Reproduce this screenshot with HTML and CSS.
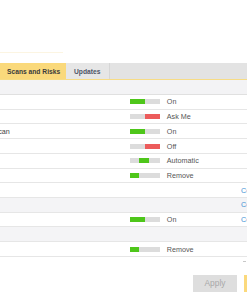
FILE: index.html
```html
<!DOCTYPE html>
<html>
<head>
<meta charset="utf-8">
<link rel="stylesheet" href="styles.css">
</head>
<body>
<div class="page">
  <div class="top"><div class="glow"></div></div>
  <div class="tabs">
    <div class="tab active">Scans and Risks</div>
    <div class="tab">Updates</div>
  </div>
  <div class="list">
    <div class="row head"></div>
    <div class="row"><div class="label"></div><div class="bar"><span class="fill green" style="left:0;width:50%"></span></div><div class="status">On</div><div class="link"></div></div>
    <div class="row"><div class="label"></div><div class="bar"><span class="fill red" style="left:50%;width:50%"></span></div><div class="status">Ask Me</div><div class="link"></div></div>
    <div class="row"><div class="label"><span class="clip"><span>can</span></span></div><div class="bar"><span class="fill green" style="left:0;width:50%"></span></div><div class="status">On</div><div class="link"></div></div>
    <div class="row"><div class="label"></div><div class="bar"><span class="fill red" style="left:50%;width:50%"></span></div><div class="status">Off</div><div class="link"></div></div>
    <div class="row"><div class="label"></div><div class="bar"><span class="fill green" style="left:33.3%;width:33.3%"></span></div><div class="status">Automatic</div><div class="link"></div></div>
    <div class="row"><div class="label"></div><div class="bar"><span class="fill green" style="left:0;width:33.3%"></span></div><div class="status">Remove</div><div class="link"></div></div>
    <div class="row"><div class="label"></div><div class="nobar"></div><div class="status"></div><div class="link">Co</div></div>
    <div class="row shade"><div class="label"></div><div class="nobar"></div><div class="status"></div><div class="link">Co</div></div>
    <div class="row"><div class="label"></div><div class="bar"><span class="fill green" style="left:0;width:50%"></span></div><div class="status">On</div><div class="link">Co</div></div>
    <div class="row shade"></div>
    <div class="row"><div class="label"></div><div class="bar"><span class="fill green" style="left:0;width:33.3%"></span></div><div class="status">Remove</div><div class="link"></div></div>
  </div>
  <div class="footer">
    <div class="dash"></div>
    <div class="buttons">
      <div class="btn apply">Apply</div>
      <div class="btn ok"></div>
    </div>
  </div>
</div>
</body>
</html>
```
FILE: styles.css
```css
html, body {
  margin: 0;
  padding: 0;
  background: #ffffff;
}
body {
  width: 247px;
  height: 296px;
  overflow: hidden;
  font-family: "Liberation Sans", Arial, sans-serif;
  color: #555;
}
.page {
  width: 247px;
}
.top {
  height: 63px;
  display: flex;
  flex-direction: column;
}
.glow {
  margin-top: 52px;
  width: 63px;
  height: 1px;
  background: #fcf5e2;
}
.tabs {
  height: 16px;
  display: flex;
  background: #e3e3e3;
  border-bottom: 1px solid #f7dc85;
}
.tab {
  display: flex;
  align-items: center;
  flex: none;
  white-space: nowrap;
  font-weight: bold;
  font-size: 6.7px;
  color: #4d5466;
  padding: 0 0 0 8px;
  width: 44px;
  box-sizing: border-box;
  background: #e6e6e6;
  border-right: 1px solid #d6d6d6;
}
.tab.active {
  width: 66px;
  padding-left: 7px;
  background: #fad97b;
  color: #3b3b3b;
  border-right: none;
}
.list {
  display: flex;
  flex-direction: column;
}
.row {
  height: 13.73px;
  border-bottom: 1px solid #e6e6e6;
  display: flex;
  align-items: center;
  font-size: 7.2px;
}
.row.head {
  height: 14px;
  background: #f3f3f5;
  border-bottom-color: #e0e0e0;
}
.row.shade {
  background: #f4f4f6;
}
.label {
  width: 129.5px;
  flex: none;
  display: flex;
  color: #444;
}
.clip {
  width: 9.8px;
  overflow: hidden;
  display: flex;
  justify-content: flex-end;
  white-space: nowrap;
}
.bar, .nobar {
  position: relative;
  width: 30px;
  height: 5px;
  flex: none;
}
.bar {
  background: #dcdcdc;
}
.fill {
  position: absolute;
  top: 0;
  bottom: 0;
}
.fill.green { background: #4ec61a; }
.fill.red { background: #ec5b5b; }
.status {
  width: 81.5px;
  flex: none;
  padding-left: 7.3px;
  box-sizing: border-box;
  color: #555;
}
.link {
  color: #3f92d4;
  white-space: nowrap;
}
.footer {
  display: flex;
  flex-direction: column;
}
.dash {
  margin: 4px 0 0 243px;
  width: 3px;
  height: 1px;
  background: #c8c8c8;
}
.buttons {
  display: flex;
  margin: 13px 0 0 193px;
  gap: 6.5px;
}
.btn {
  flex: none;
  height: 17px;
  display: flex;
  align-items: center;
  justify-content: center;
  font-size: 8.4px;
}
.btn.apply {
  width: 44px;
  background: #dedede;
  color: #a9a9a9;
}
.btn.ok {
  width: 40px;
  background: #fbd97c;
}
```
